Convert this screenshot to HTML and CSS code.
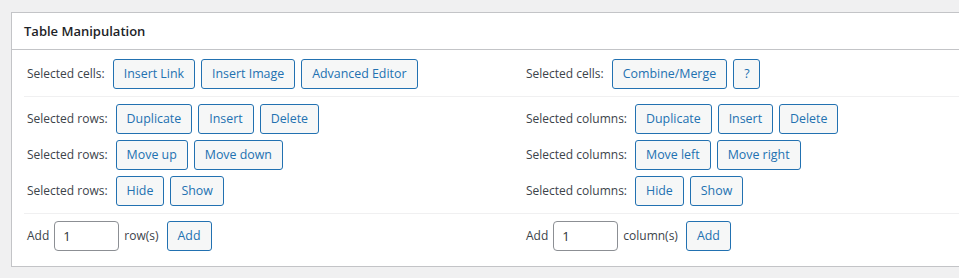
FILE: index.html
```html
<!DOCTYPE html>
<html lang="en">
<head>
  <meta charset="UTF-8" />
  <title>Table Manipulation</title>
  <link rel="stylesheet" href="styles.css">
</head>
<body>
  <div class="wrap">
    <div class="postbox">
      <div class="postbox-header">
        <h2>Table Manipulation</h2>
      </div>
      <div class="inside">
        <div class="group first">
          <div class="cell">
            <span class="label">Selected cells:</span>
            <button class="button">Insert Link</button>
            <button class="button">Insert Image</button>
            <button class="button">Advanced Editor</button>
          </div>
          <div class="cell">
            <span class="label">Selected cells:</span>
            <button class="button">Combine/Merge</button>
            <button class="button">?</button>
          </div>
        </div>
        <div class="group">
          <div class="cell">
            <span class="label">Selected rows:</span>
            <button class="button">Duplicate</button>
            <button class="button">Insert</button>
            <button class="button">Delete</button>
          </div>
          <div class="cell">
            <span class="label">Selected columns:</span>
            <button class="button">Duplicate</button>
            <button class="button">Insert</button>
            <button class="button">Delete</button>
          </div>
          <div class="cell">
            <span class="label">Selected rows:</span>
            <button class="button">Move up</button>
            <button class="button">Move down</button>
          </div>
          <div class="cell">
            <span class="label">Selected columns:</span>
            <button class="button">Move left</button>
            <button class="button">Move right</button>
          </div>
          <div class="cell">
            <span class="label">Selected rows:</span>
            <button class="button">Hide</button>
            <button class="button">Show</button>
          </div>
          <div class="cell">
            <span class="label">Selected columns:</span>
            <button class="button">Hide</button>
            <button class="button">Show</button>
          </div>
        </div>
        <div class="group last">
          <div class="cell add">
            <span>Add</span>
            <input type="text" class="small-text" value="1">
            <span class="unit">row(s)</span>
            <button class="button">Add</button>
          </div>
          <div class="cell add">
            <span>Add</span>
            <input type="text" class="small-text" value="1">
            <span class="unit">column(s)</span>
            <button class="button">Add</button>
          </div>
        </div>
      </div>
    </div>
  </div>
</body>
</html>
```

FILE: styles.css
```css
:root {
  --bg: #f0f0f1;
  --border: #c3c4c7;
  --text: #3c434a;
  --heading: #1d2327;
  --blue: #2271b1;
}
* {
  margin: 0;
  padding: 0;
  box-sizing: border-box;
}
html, body {
  overflow: hidden;
}
body {
  background: var(--bg);
  color: var(--text);
  font-family: "Open Sans", "Noto Sans", sans-serif;
  font-size: 12px;
  line-height: 1.4;
}
.wrap {
  padding: 12px 0 0 11px;
}
.postbox {
  width: 1040px;
  background: #fff;
  border: 1px solid var(--border);
}
.postbox-header {
  height: 37px;
  border-bottom: 1px solid var(--border);
  display: flex;
  align-items: center;
  padding: 0 12px;
}
.postbox-header h2 {
  font-size: 13px;
  font-weight: 600;
  color: var(--heading);
  padding-top: 1px;
}
.inside {
  padding: 0 12px;
}
.group {
  display: grid;
  grid-template-columns: 499px 499px;
  row-gap: 6px;
  padding: 7px 0;
  border-top: 1px solid var(--bg);
}
.group.first {
  padding-top: 9px;
  border-top: none;
}
.group.last {
  padding-bottom: 15px;
}
.cell {
  display: flex;
  align-items: center;
  gap: 6px;
  padding-left: 3px;
  height: 30px;
}
.label {
  margin-right: 2px;
}
.button {
  height: 30px;
  padding: 0 10px;
  font: inherit;
  font-size: 12.4px;
  color: var(--blue);
  background: #f6f7f7;
  border: 1px solid var(--blue);
  border-radius: 3px;
  cursor: pointer;
}
.add {
  gap: 5px;
}
.small-text {
  width: 65px;
  height: 30px;
  padding: 0 8px;
  font: inherit;
  font-size: 13px;
  color: #2c3338;
  border: 1px solid #8c8f94;
  border-radius: 4px;
}
.unit {
  margin-right: 3px;
}
```
